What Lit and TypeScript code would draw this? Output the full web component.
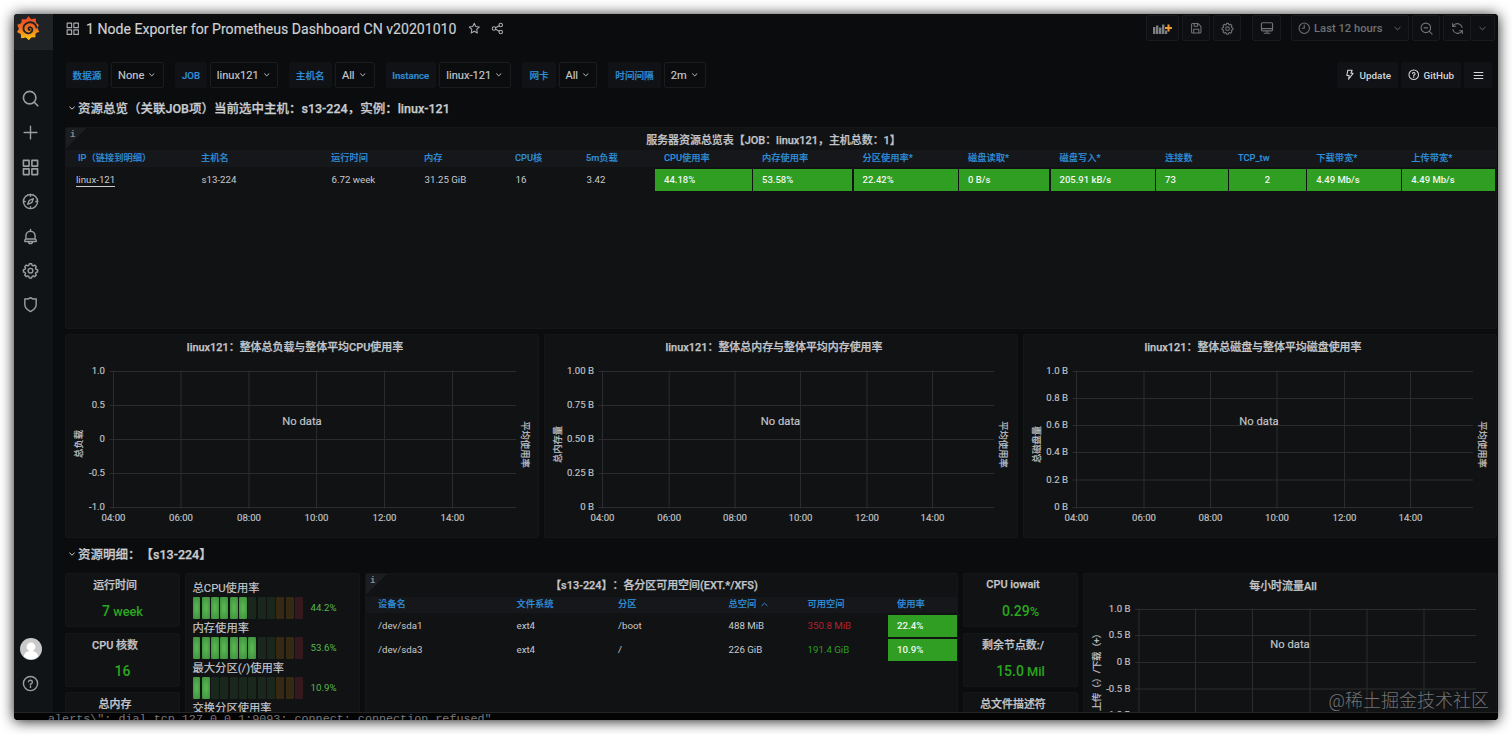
import { LitElement, html, svg, css, nothing } from "lit";
import { customElement, property } from "lit/decorators.js";

const GEAR = svg`<path d="M10.3 2.5h3.4l.6 2.3 1.5.7 2.1-1.2 2.3 2.3-1.2 2.1.7 1.6 2.3.6v3.2l-2.3.6-.7 1.6 1.2 2.1-2.3 2.3-2.1-1.2-1.5.7-.6 2.3h-3.4l-.6-2.3-1.500-.7-2.100 1.200-2.300-2.300L5 16.300l-.7-1.600-2.300-.6v-3.200l2.300-.6.7-1.600-1.200-2.100 2.300-2.300 2.100 1.200 1.500-.7z"/><circle cx="12" cy="12.300" r="3.300"/>`;

const ICONS: Record<string, unknown> = {
  search: svg`<circle cx="10.800" cy="10.800" r="8.800"/><path d="m17.300 17.300 5 5"/>`,
  plus: svg`<path d="M12 3v18M3 12h18"/>`,
  apps: svg`<path d="M2 2h8v8H2zM14 2h8v8h-8zM2 14h8v8H2zM14 14h8v8h-8z"/>`,
  compass: svg`<circle cx="12" cy="12" r="10"/><path d="m16 8-2.300 5.700L8 16l2.300-5.700zM12 2v2.500M12 19.500V22M2 12h2.500M19.500 12H22"/>`,
  bell: svg`<path d="M12 2v2M5.500 15.500V11a6.500 6.500 0 0 1 13 0v4.500M4 19v-1.500a2 2 0 0 1 1.500-2h13a2 2 0 0 1 1.500 2V19zM9 19a3 3 0 0 0 6 0"/>`,
  gear: GEAR,
  shield: svg`<path d="M4 4c3 .6 5.600.2 8-1.700 2.400 1.900 5 2.300 8 1.700v8c0 4-3 7.300-8 10-5-2.700-8-6-8-10z"/>`,
  help: svg`<circle cx="12" cy="12" r="10"/><path d="M9.300 9.500A2.700 2.700 0 1 1 12 12.700v1.300M12 16.300v1.200"/>`,
  star: svg`<path d="m12 2.500 2.900 6.200 6.700.9-4.900 4.700 1.200 6.800-5.900-3.300-5.900 3.300 1.200-6.800-4.900-4.700 6.700-.9z"/>`,
  share: svg`<circle cx="5.500" cy="12" r="3.200"/><circle cx="18" cy="5.500" r="3.200"/><circle cx="18" cy="18.500" r="3.200"/><path d="m8.500 10.500 6.700-3.500M8.500 13.500l6.700 3.500"/>`,
  save: svg`<path d="M3 5a2 2 0 0 1 2-2h10.500L21 8.500V19a2 2 0 0 1-2 2H5a2 2 0 0 1-2-2zM8 3v5h6.500V3M7 21v-7h10v7"/>`,
  monitor: svg`<path d="M4.500 3h15A2 2 0 0 1 21.500 5v10a2 2 0 0 1-2 2h-15a2 2 0 0 1-2-2V5a2 2 0 0 1 2-2zM2.500 13h19M12 17v4M7 21h10"/>`,
  clock: svg`<circle cx="12" cy="12" r="10"/><path d="M12 6v6H8"/>`,
  zoomout: svg`<circle cx="10.800" cy="10.800" r="8.800"/><path d="m17.300 17.300 5 5M7.500 10.800h6.600"/>`,
  sync: svg`<path d="M20.500 10A9 9 0 0 0 5 6L3 8M3 3v5h5M3.500 14A9 9 0 0 0 19 18l2-2M21 21v-5h-5"/>`,
  down: svg`<path d="m5 9 7 6.500L19 9"/>`,
  up: svg`<path d="m5 15 7-6.500 7 6.500"/>`,
  bolt: svg`<path d="M8 2.500h9l-2.500 6.500h4.500L9.500 21.500l1.500-8H6z"/>`,
  menu: svg`<path d="M2.500 5.500h19M2.500 12h19M2.500 18.500h19"/>`,
};

function icon(name: string, size: number, stroke = 2) {
  return html`<svg width=${size} height=${size} viewBox="0 0 24 24" fill="none" stroke="currentColor"
    stroke-width=${stroke} stroke-linecap="round" stroke-linejoin="round">${ICONS[name]}</svg>`;
}

const base = css`
  :host { display: block; box-sizing: border-box; min-width: 0; }
  *, *::before, *::after { box-sizing: border-box; }
  svg { display: block; flex: none; }
  .panel { position: relative; height: 100%; background: #111214; border: 1px solid #141618; border-radius: 2px; overflow: hidden; }
  .title { height: 22px; display: flex; align-items: center; justify-content: center; padding-right: 15px;
    font-size: 10.95px; font-weight: 500; color: #c3c6ca; white-space: nowrap; -webkit-text-stroke: 0.25px currentColor; }
  .corner { position: absolute; left: 0; top: 0; width: 21px; height: 21px; color: #8a8d91;
    background: linear-gradient(135deg, #1b1d20 50%, transparent 50%); font: 700 9px/14px "Liberation Mono", monospace; padding-left: 4px; }
`;

interface ChartSpec {
  title: string;
  box: [number, number, number, number];
  xs: number[];
  right: number;
  ys: number[];
  labels: string[];
  left: string;
  leftAt: [number, number, number];
  rightAt?: [number, number];
  empty: [number, number];
}

@customElement("graph-panel")
export class GraphPanel extends LitElement {
  @property({ attribute: false }) spec!: ChartSpec;
  static styles = [base, css`
    :host { height: 100%; }
    .panel { display: grid; grid-template: 22px 1fr / 1fr; }
    .plot { overflow: visible; margin-top: -1px; margin-left: -1px; }
    .grid { stroke: #2a2c2f; stroke-width: 1; }
    text { font-family: Roboto, "Noto Sans CJK SC", sans-serif; font-size: 9.6px; fill: #c0c3c7; font-weight: 400; stroke: #c0c3c7; stroke-width: 0.15px; }
    .y { text-anchor: end; }
    .m { text-anchor: middle; }
    .none { font-size: 11.2px; text-anchor: middle; fill: #c3c6ca; }
    .side { font-size: 9.300px; text-anchor: middle; stroke-width: 0.2px; }
  `];
  render() {
    const s = this.spec;
    const [bx, by, bw, bh] = s.box;
    const x0 = s.xs[0];
    const bottom = s.ys[s.ys.length - 1];
    const times = ["04:00", "06:00", "08:00", "10:00", "12:00", "14:00"];
    return html`<div class="panel">
      <div class="title">${s.title}</div>
      <svg class="plot" width=${bw} height=${bh - 22} viewBox="${bx} ${by + 22} ${bw} ${bh - 22}">
        ${s.ys.map((y) => svg`<line class="grid" x1=${x0 - 4} x2=${s.right} y1=${y} y2=${y}/>`)}
        ${s.xs.map((x) => svg`<line class="grid" x1=${x} x2=${x} y1=${s.ys[0] - 1} y2=${bottom + 1}/>`)}
        ${s.labels.map((l, i) => svg`<text class="y" x=${x0 - 8.500} y=${s.ys[i] + 2.500}>${l}</text>`)}
        ${s.xs.map((x, i) => svg`<text class="m" x=${x} y=${bottom + 13.500}>${times[i]}</text>`)}
        <text class="side" textLength=${s.leftAt[2]} transform="translate(${s.leftAt[0] + 3.5} ${s.leftAt[1]}) rotate(-90)">${s.left}</text>
        ${s.rightAt ? svg`<text class="side" transform="translate(${s.rightAt[0] - 3.5} ${s.rightAt[1]}) rotate(90)">平均使用率</text>` : nothing}
        <text class="none" x=${s.empty[0]} y=${s.empty[1] + 4}>No data</text>
      </svg>
    </div>`;
  }
}

@customElement("stat-panel")
export class StatPanel extends LitElement {
  @property() label = "";
  @property() value = "";
  @property() unit = "";
  static styles = [base, css`
    :host { height: 54px; }
    .title { height: 20px; }
    .value { display: flex; justify-content: center; align-items: baseline; color: #2aa81e; font-size: 14px; font-weight: 500; line-height: 34px; white-space: pre; }
    .unit { font-size: 12.800px; }
  `];
  render() {
    return html`<div class="panel"><div class="title">${this.label}</div>
      <div class="value">${this.value}<span class="unit">${this.unit}</span></div></div>`;
  }
}

@customElement("bar-gauges")
export class BarGauges extends LitElement {
  static styles = [base, css`
    :host { height: 141px; }
    .panel { padding: 5px 0 0 6.500px; }
    .name { height: 18px; line-height: 20px; font-size: 11.3px; color: #c6c9cd; white-space: nowrap; -webkit-text-stroke: 0.15px currentColor; }
    .row { height: 22px; display: flex; align-items: center; }
    .bars { display: flex; gap: 1.4px; margin-right: 7.500px; }
    .bar { width: 7.95px; height: 21.500px; border-radius: 1px; }
    .on { background: radial-gradient(ellipse at center, #58b552 10%, #3c8c3a 100%); }
    .g { background: #1a271d; }
    .o { background: #362914; }
    .r { background: #36191c; }
    .val { font-size: 9.700px; line-height: 21px; height: 22px; color: #56b84d; }
  `];
  render() {
    const rows: [string, number, string][] = [
      ["总CPU使用率", 6, "44.2%"], ["内存使用率", 7, "53.6%"], ["最大分区(/)使用率", 2, "10.9%"], ["交换分区使用率", 0, ""],
    ];
    return html`<div class="panel">${rows.map(([n, on, v]) => html`
      <div class="name">${n}</div>
      ${v ? html`<div class="row"><div class="bars">${Array.from({ length: 12 }, (_, i) => html`<div class="bar ${i < on ? "on" : i < 9 ? "g" : i < 11 ? "o" : "r"}"></div>`)}</div><span class="val">${v}</span></div>` : nothing}`)}
    </div>`;
  }
}

@customElement("overview-table")
export class OverviewTable extends LitElement {
  static styles = [base, css`
    :host { height: 202px; }
    .title { height: 22px; }
    .grid { display: grid; padding-left: 1px; grid-template-columns: 125px 130px 93px 91px 71px 78px 98px 100.500px 105.500px 91.500px 105.500px 73px 78.200px 95px 94px; white-space: nowrap; }
    .head { height: 17px; padding-bottom: 2px; background: #16171a; align-items: center; color: #2f8fd8; font-size: 9.25px; font-weight: 500; }
    .head span { padding-left: 9px; line-height: 14px; -webkit-text-stroke: 0.15px currentColor; }
    .head span:first-child { padding-left: 11px; }
    .vals { margin-top: 2px; height: 22px; line-height: 22px; font-size: 9.700px; color: #c8cacd; }
    .vals span { padding-left: 9.500px; }
    .vals .link { padding-left: 9px; }
    .link u { text-decoration: none; border-bottom: 1px solid #c8cacd; padding-bottom: 1px; }
    .vals .green { background: #2f9e22; color: #f2f7f0; margin-right: 1.500px; padding-left: 9px; font-weight: 500; font-size: 9.500px; }
    .vals .mid { padding-left: 0; text-align: center; }
  `];
  render() {
    const cols = ["IP（链接到明细）", "主机名", "运行时间", "内存", "CPU核", "5m负载", "CPU使用率", "内存使用率", "分区使用率*", "磁盘读取*", "磁盘写入*", "连接数", "TCP_tw", "下载带宽*", "上传带宽*"];
    const plain = ["s13-224", "6.72 week", "31.25 GiB", "16", "3.42"];
    const green = ["44.18%", "53.58%", "22.42%", "0 B/s", "205.91 kB/s", "73", "2", "4.49 Mb/s", "4.49 Mb/s"];
    return html`<div class="panel">
      <div class="corner">i</div>
      <div class="title">服务器资源总览表【JOB：linux121，主机总数：1】</div>
      <div class="grid head">${cols.map((c) => html`<span>${c}</span>`)}</div>
      <div class="grid vals"><span class="link"><u>linux-121</u></span>${plain.map((v) => html`<span>${v}</span>`)}
        ${green.map((v, i) => html`<span class="green ${i === 6 ? "mid" : ""}">${v}</span>`)}</div>
    </div>`;
  }
}

@customElement("partition-table")
export class PartitionTable extends LitElement {
  static styles = [base, css`
    :host { height: 141px; }
    .title { height: 23px; padding-bottom: 4px; }
    .grid { display: grid; grid-template-columns: 138.500px 101.500px 110.500px 79px 80.500px 69px; padding-left: 12px; white-space: nowrap; }
    .head { height: 16px; padding-bottom: 2px; background: #16171a; align-items: center; color: #2f8fd8; font-size: 9.250px; font-weight: 500; }
    .head span { display: flex; align-items: center; gap: 4px; line-height: 14px; -webkit-text-stroke: 0.15px currentColor; }
    .head span:last-child { padding-left: 9px; }
    .vals { margin-top: 2px; height: 22px; line-height: 22px; font-size: 9.700px; color: #c8cacd; }
    .vals:last-child { margin-top: 1.500px; }
    .low { color: #b3222c; }
    .ok { color: #2f9e22; }
    .green { background: #2f9e22; color: #f2f7f0; padding-left: 9px; font-weight: 500; }
  `];
  render() {
    const row = (a: string[], cls: string) => html`<div class="grid vals">${a.map((v, i) => html`<span class=${i === 4 ? cls : i === 5 ? "green" : ""}>${v}</span>`)}</div>`;
    return html`<div class="panel">
      <div class="corner">i</div>
      <div class="title">【s13-224】：各分区可用空间(EXT.*/XFS)</div>
      <div class="grid head"><span>设备名</span><span>文件系统</span><span>分区</span><span>总空间 ${icon("up", 9, 2.5)}</span><span>可用空间</span><span>使用率</span></div>
      ${row(["/dev/sda1", "ext4", "/boot", "488 MiB", "350.8 MiB", "22.4%"], "low")}
      ${row(["/dev/sda3", "ext4", "/", "226 GiB", "191.4 GiB", "10.9%"], "ok")}
    </div>`;
  }
}

@customElement("side-nav")
export class SideNav extends LitElement {
  static styles = [base, css`
    :host { height: 100%; background: #111416; }
    nav { height: 100%; display: flex; flex-direction: column; align-items: center; color: #9a9da1; padding-right: 6px; }
    .logo { align-self: flex-start; width: 39px; height: 36px; background: #202326; padding: 1px 0 0 2px; }
    .items { display: flex; flex-direction: column; gap: 17.400px; margin-top: 40px; }
    .bottom { margin-top: auto; display: flex; flex-direction: column; align-items: center; gap: 15px; padding-bottom: 21px; }
  `];
  render() {
    return html`<nav>
      <div class="logo"><svg width="25" height="26" viewBox="0 0 25 26">
        <defs><linearGradient id="lg" x1="0" y1="0" x2="0" y2="1"><stop offset="0" stop-color="#ec4429"/><stop offset=".5" stop-color="#f3701f"/><stop offset="1" stop-color="#fcc915"/></linearGradient></defs>
        <path fill="url(#lg)" d="M12.500 1q1.200 2 2.700 3.300 2.300-.7 4.600-.9-.1 2.600.5 4.600 1.500 1 2.600 2.200-1.100 1.200-1.300 2.800.8 2 1.600 3.900-2.200.4-3.600 1.700-.1 2-.4 3.900-2.200-.6-4-.1-1.100 1.300-2.300 2.800-1.500-1.700-3.300-2.700-2.200.6-4.500.7.2-2.300-.4-4.200Q2.800 18.200 1 17q1.400-1.600 1.900-3.500Q1.900 11.700 1.300 9.700q2.300-.4 4-1.600.4-2 .5-4 2.200.5 4.200.2Q11.500 3 12.500 1z"/>
        <path fill="none" stroke="#202326" stroke-width="1.900" stroke-linecap="round" d="M20.500 12.500c-.8-4-4.400-5.900-7.800-5.100-4 .9-6 4.200-5.100 7.400.9 3.100 4.300 4.400 6.900 2.900 2.300-1.400 2.500-4.200.5-5.200-1.400-.7-2.800.2-2.500 1.600.2.700.8.9 1.200.8"/></svg></div>
      <div class="items">${["search", "plus", "apps", "compass", "bell", "gear", "shield"].map((n) => icon(n, 17, n === "search" || n === "apps" ? 2.300 : 2))}</div>
      <div class="bottom"><svg width="22" height="22" viewBox="0 0 22 22"><circle cx="11" cy="11" r="11" fill="#c9c9c9"/><circle cx="11" cy="8.800" r="4.400" fill="#fff"/><path d="M3.800 18.500c.4-3.500 2.700-5.600 7.200-5.600s6.800 2.100 7.200 5.600a11 11 0 0 1-14.400 0z" fill="#fff"/></svg>
      ${icon("help", 17, 2)}</div>
    </nav>`;
  }
}

@customElement("top-bar")
export class TopBar extends LitElement {
  static styles = [base, css`
    :host { height: 36px; }
    .bar { display: flex; align-items: center; height: 29px; padding: 0 3px 0 13px; color: #a9acb0; }
    h1 { margin: 0 12px 0 6.500px; font-size: 14.100px; font-weight: 400; color: #cfd1d4; white-space: nowrap; -webkit-text-stroke: 0.15px currentColor; }
    .share { margin-left: 10.500px; margin-right: auto; }
    .btn { height: 26px; border: 1px solid #181a1d; background: #0e0f12; border-radius: 2px; display: flex; align-items: center; justify-content: center; width: 28px; color: #6f7276; margin-left: 3px; margin-top: -1px; font-size: 11.200px; font-weight: 500; }
    .add { width: 33px; margin-left: 0; }
    .mon { width: 29px; margin-left: 11px; }
    .time { width: 118px; margin-left: 10px; gap: 4px; white-space: nowrap; }
    .time svg:last-child { margin-left: 7px; }
    .more { width: 25px; margin-left: -1px; }
  `];
  render() {
    return html`<div class="bar">
      ${icon("apps", 13.500, 2)}<h1>1 Node Exporter for Prometheus Dashboard CN v20201010</h1>
      ${icon("star", 12.500, 2)}<span class="share">${icon("share", 13, 2)}</span>
      <div class="btn add"><svg width="20" height="13" viewBox="0 0 20 13"><path fill="#7b7e82" d="M0 5h2.400v7H0zM3 3.500h2.400V12H3zM6 5.500h2.400V12H6zM9 2.500h2.400V12H9zM12 8.500h2.200V12H12z"/><path stroke="#f59a2e" stroke-width="2" d="M15.500 2.500v7M12 6h7"/></svg></div>
      <div class="btn">${icon("save", 12.500)}</div><div class="btn">${icon("gear", 13)}</div>
      <div class="btn mon">${icon("monitor", 14)}</div>
      <div class="btn time">${icon("clock", 12.500)}<span>Last 12 hours</span>${icon("down", 9, 2.500)}</div>
      <div class="btn">${icon("zoomout", 13)}</div><div class="btn">${icon("sync", 13)}</div><div class="btn more">${icon("down", 9, 2.500)}</div>
    </div>`;
  }
}

@customElement("variable-bar")
export class VariableBar extends LitElement {
  static styles = [base, css`
    :host { height: 26px; }
    .bar { display: flex; height: 26px; padding: 0 5px 0 1px; white-space: nowrap; }
    .label, .value, .link { height: 26px; display: flex; align-items: center; justify-content: center; border-radius: 2px; }
    .label { background: #101215; color: #2f8fd8; font-size: 9.600px; font-weight: 500; -webkit-text-stroke: 0.2px currentColor; }
    .value { border: 1px solid #1a1c1f; color: #c6c9cc; font-size: 11.100px; gap: 4px; margin: 0 11px 0 3px; padding-right: 1px; -webkit-text-stroke: 0.15px currentColor; }
    .spacer { flex: 1; }
    .link { background: #101215; color: #d3d5d8; font-size: 9.900px; font-weight: 500; gap: 4px; margin-left: 3px; }
  `];
  render() {
    const vars: [string, number, string, number][] = [
      ["数据源", 42, "None", 53], ["JOB", 32, "linux121", 68], ["主机名", 42.500, "All", 40], ["Instance", 50.500, "linux-121", 72], ["网卡", 34, "All", 38], ["时间间隔", 53, "2m", 42],
    ];
    return html`<div class="bar">
      ${vars.map(([l, lw, v, vw]) => html`<div class="label" style="width:${lw}px">${l}</div><div class="value" style="width:${vw}px">${v}${icon("down", 7.500, 3)}</div>`)}
      <div class="spacer"></div>
      <div class="link" style="width:61px">${icon("bolt", 11.500, 2.200)}<span>Update</span></div>
      <div class="link" style="width:60px">${icon("help", 11.500, 2.200)}<span>GitHub</span></div>
      <div class="link" style="width:28px">${icon("menu", 11, 2.500)}</div>
    </div>`;
  }
}

const YS5 = [371.5, 405.5, 439.5, 473.5, 507.5];
const GRAPHS: ChartSpec[] = [
  { title: "linux121：整体总负载与整体平均CPU使用率", box: [65, 334, 474, 203], xs: [113.5, 181, 249, 316.500, 384.500, 452.500], right: 516, ys: YS5, labels: ["1.0", "0.5", "0", "-0.5", "-1.0"], left: "总负载", leftAt: [78.500, 444, 28], rightAt: [525, 444.5], empty: [302, 421] },
  { title: "linux121：整体总内存与整体平均内存使用率", box: [544, 334, 474, 203], xs: [602.5, 669.200, 735, 800.500, 867, 932.500], right: 994, ys: YS5, labels: ["1.00 B", "0.75 B", "0.50 B", "0.25 B", "0 B"], left: "总内存量", leftAt: [557.500, 444.500, 37], rightAt: [1003.500, 444.500], empty: [780.500, 421] },
  { title: "linux121：整体总磁盘与整体平均磁盘使用率", box: [1023, 334, 474, 203], xs: [1076.500, 1144, 1210.500, 1277, 1344.500, 1410.500], right: 1473, ys: [371.5, 398.500, 425.500, 452.500, 480, 507.500], labels: ["1.0 B", "0.8 B", "0.6 B", "0.4 B", "0.2 B", "0 B"], left: "总磁盘量", leftAt: [1036, 444.500, 37], rightAt: [1482.500, 444.500], empty: [1259, 421] },
];
const TRAFFIC: ChartSpec = { title: "每小时流量All", box: [1083, 573, 414, 200], xs: [1139, 1195.500, 1252.500, 1310, 1367, 1424], right: 1476, ys: [609.500, 635.500, 662.500, 689, 715.500], labels: ["1.0 B", "0.5 B", "0 B", "-0.5 B", "-1.0 B"], left: "上传（-）/下载（+）", leftAt: [1096.500, 670, 82], empty: [1290, 644] };

@customElement("app-root")
export class AppRoot extends LitElement {
  static styles = [base, css`
    :host { height: 734px; padding: 14px; background: #fff; overflow: hidden; font-family: Roboto, "Noto Sans CJK SC", sans-serif; text-spacing-trim: space-all; }
    .window { width: 1484px; height: 706px; border-radius: 4px; background: #050506; box-shadow: 0 1px 14px rgba(0, 0, 0, 0.9); position: relative; }
    .clip { width: 100%; height: 100%; border-radius: 4px; overflow: hidden; display: grid; grid-template-rows: 699px 7px; }
    .browser { display: grid; grid-template-columns: 39px 1fr; overflow: hidden; background: #0b0c0e; border-bottom: 1px solid #222426; min-height: 0; }
    main { min-width: 0; overflow: hidden; height: 699px; }
    .content { padding: 12px 1px 0 12px; }
    .rowhead { display: flex; align-items: center; gap: 2px; padding-left: 3px; font-size: 12.500px; font-weight: 500; color: #c9ccd0; white-space: nowrap; -webkit-text-stroke: 0.25px currentColor; }
    .first { height: 39px; }
    .second { height: 36px; padding-bottom: 3px; }
    .graphs { display: grid; grid-template-columns: repeat(3, 474px); gap: 5px; height: 203px; margin-top: 5px; }
    .details { display: grid; grid-template-columns: 115px 175px 593px 115px 414px; gap: 5px; height: 141px; }
    .stats { display: flex; flex-direction: column; gap: 5.500px; }
    .tall { height: 200px; }
    .terminal { background: #040405; overflow: hidden; padding-left: 34px; font: 11.740px/13px "Liberation Mono", monospace; color: #77797b; white-space: pre; }
    .mark { position: absolute; right: 9px; bottom: 6px; font-size: 18px; line-height: 26px; font-weight: 300; color: rgba(210, 212, 216, 0.5); white-space: nowrap; }
  `];
  render() {
    return html`<div class="window"><div class="clip">
      <div class="browser">
        <side-nav></side-nav>
        <main>
          <top-bar></top-bar>
          <div class="content">
            <variable-bar></variable-bar>
            <div class="rowhead first">${icon("down", 8, 3)}资源总览（关联JOB项）当前选中主机：s13-224，实例：linux-121</div>
            <overview-table></overview-table>
            <div class="graphs">${GRAPHS.map((g) => html`<graph-panel .spec=${g}></graph-panel>`)}</div>
            <div class="rowhead second">${icon("down", 8, 3)}资源明细：【s13-224】</div>
            <div class="details">
              <div class="stats">
                <stat-panel label="运行时间" value="7" unit=" week"></stat-panel>
                <stat-panel label="CPU 核数" value="16"></stat-panel>
                <stat-panel label="总内存"></stat-panel>
              </div>
              <bar-gauges></bar-gauges>
              <partition-table></partition-table>
              <div class="stats">
                <stat-panel label="CPU iowait" value="0.29" unit="%"></stat-panel>
                <stat-panel label="剩余节点数:/" value="15.0" unit=" Mil"></stat-panel>
                <stat-panel label="总文件描述符"></stat-panel>
              </div>
              <div class="tall"><graph-panel .spec=${TRAFFIC}></graph-panel></div>
            </div>
          </div>
        </main>
      </div>
      <div class="terminal">alerts\\": dial tcp 127.0.0.1:9093: connect: connection refused"</div>
      </div>
      <div class="mark">@稀土掘金技术社区</div>
    </div>`;
  }
}
